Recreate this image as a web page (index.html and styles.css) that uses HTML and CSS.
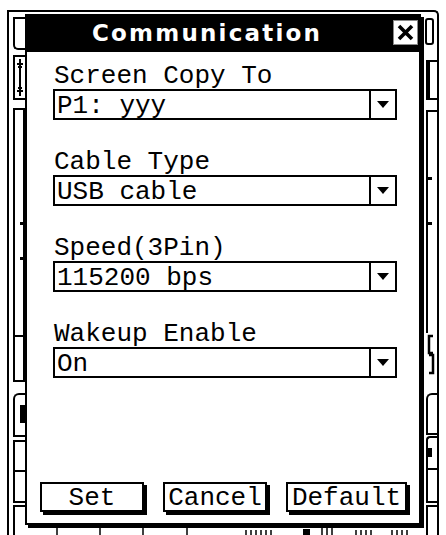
FILE: index.html
```html
<!DOCTYPE html>
<html lang="en">
<head>
<meta charset="utf-8">
<title>Communication</title>
<link rel="stylesheet" href="styles.css">
</head>
<body>
<div class="frame">
  <div class="strip strip-left">
    <div class="tab tab-a"></div>
    <div class="tab tab-b">
      <svg class="glyph" width="10" height="41" viewBox="0 0 10 41"><path d="M5 2V39M2 7H8M3 10H7M2 34H8M3 31H7" stroke="#000" stroke-width="2" fill="none"/></svg>
    </div>
    <div class="tab tab-c">
      <span class="mark mark-1"></span>
      <span class="mark mark-2"></span>
      <span class="divider"></span>
    </div>
    <div class="tab tab-d"><span class="knob"></span></div>
    <div class="tab tab-e"></div>
    <div class="tab tab-f"></div>
    <div class="tab tab-g"></div>
  </div>

  <div class="center">
    <div class="dialog">
      <div class="titlebar">
        <span class="title">Communication</span>
        <span class="close">
          <svg width="23" height="23" viewBox="0 0 23 23"><path d="M5 5L18 18M18 5L5 18" stroke="#000" stroke-width="3.6" fill="none"/></svg>
        </span>
      </div>
      <div class="body">
        <div class="field">
          <div class="label">Screen Copy To</div>
          <div class="select"><span class="value">P1: yyy</span><span class="arrow"></span></div>
        </div>
        <div class="field">
          <div class="label">Cable Type</div>
          <div class="select"><span class="value">USB cable</span><span class="arrow"></span></div>
        </div>
        <div class="field">
          <div class="label">Speed(3Pin)</div>
          <div class="select"><span class="value">115200 bps</span><span class="arrow"></span></div>
        </div>
        <div class="field">
          <div class="label">Wakeup Enable</div>
          <div class="select"><span class="value">On</span><span class="arrow"></span></div>
        </div>
        <div class="buttons">
          <button class="btn btn-set">Set</button>
          <button class="btn btn-cancel">Cancel</button>
          <button class="btn btn-default">Default</button>
        </div>
      </div>
    </div>
    <svg class="ticks" width="399" height="8" viewBox="0 0 399 8">
      <path d="M32 0V8M75 0V8M118 0V8M162 0V8M221 2V8M226 2V8M231 2V8M236 2V8M241 2V8M246 2V8M297 0V8M302 0V8M307 0V8M331 2V8M336 2V8M341 2V8M346 2V8M367 2V8M372 2V8M377 2V8M382 2V8" stroke="#000" stroke-width="1.5"/>
      <rect x="278" y="1" width="7" height="7" fill="#000"/>
    </svg>
  </div>

  <div class="strip strip-right">
    <div class="rtab rtab-1"></div>
    <div class="rtab rtab-2"></div>
    <div class="rtab rtab-3">
      <span class="rmark rmark-1"></span>
      <span class="rmark rmark-2"></span>
    </div>
    <div class="rtab rtab-4">
      <svg width="11" height="45" viewBox="0 0 11 45"><path d="M7 3H3V20H7M3 22H7V40H3" stroke="#000" stroke-width="2.5" fill="none"/></svg>
    </div>
    <div class="rtab rtab-5"></div>
    <div class="rtab rtab-6"><span class="rblob"></span></div>
    <div class="rtab rtab-7"></div>
    <div class="rtab rtab-8"></div>
  </div>
</div>
</body>
</html>
```

FILE: styles.css
```css
html, body {
  margin: 0;
  padding: 0;
  background: #fff;
}

body {
  width: 446px;
  height: 535px;
  overflow: hidden;
  font-family: "Liberation Mono", "DejaVu Sans Mono", monospace;
  color: #000;
}

/* background window frame */
.frame {
  margin: 10px 0 0 7px;
  width: 432px;
  height: 540px;
  box-sizing: border-box;
  border: 2px solid #000;
  border-bottom: none;
  border-top-right-radius: 5px;
  display: flex;
}

.strip-left {
  width: 16px;
  display: flex;
  flex-direction: column;
  align-items: flex-end;
}

.tab {
  position: relative;
  width: 12px;
  box-sizing: border-box;
  border: 2px solid #000;
  border-right: none;
  background: #fff;
  flex-shrink: 0;
}

.tab-a { margin-top: 5px; height: 33px; border-bottom-left-radius: 5px; }
.tab-b { margin-top: 5px; height: 45px; display: flex; justify-content: center; align-items: center; }
.tab-c { margin-top: 8px; height: 274px; border-right: 2px solid #000; }
.tab-d { margin-top: 11px; height: 44px; border-top-left-radius: 6px; }
.tab-e { margin-top: 3px; height: 32px; }
.tab-f { height: 31px; border-top: none; }
.tab-g { margin-top: 2px; height: 40px; }

.glyph { display: block; }

.mark {
  position: absolute;
  right: 0;
  width: 3px;
  height: 3px;
  background: #000;
}
.mark-1 { top: 112px; }
.mark-2 { top: 147px; }

.divider {
  position: absolute;
  left: 0;
  right: 0;
  top: 225px;
  height: 2px;
  background: #000;
}

.knob {
  position: absolute;
  right: 0;
  top: 10px;
  width: 5px;
  height: 18px;
  background: #000;
}

/* center column holding the dialog */
.center {
  width: 399px;
  padding-top: 2px;
  display: flex;
  flex-direction: column;
  flex-shrink: 0;
}

.dialog {
  width: 396px;
  height: 511px;
  box-sizing: border-box;
  border: 2px solid #000;
  box-shadow: 3px 3px 0 #000;
  background: #fff;
  display: flex;
  flex-direction: column;
}

.titlebar {
  height: 36px;
  flex-shrink: 0;
  background: #000;
  display: flex;
  align-items: flex-start;
  padding-left: 65px;
}

.title {
  flex: 1;
  font-family: "DejaVu Sans", "Liberation Sans", sans-serif;
  font-weight: bold;
  font-size: 23px;
  letter-spacing: 2.2px;
  line-height: 34px;
  color: #fff;
  white-space: nowrap;
}

.close {
  margin-top: 4px;
  margin-right: 1px;
  width: 25px;
  height: 25px;
  box-sizing: border-box;
  background: #fff;
  border: 1px solid #8a8a8a;
  display: flex;
  align-items: center;
  justify-content: center;
}

.close svg { display: block; }

.body {
  flex: 1;
  display: flex;
  flex-direction: column;
  padding: 8px 0 0 26px;
}

.field + .field { margin-top: 26px; }

.label {
  font-size: 26px;
  line-height: 26px;
  padding: 3px 0 0 1px;
  white-space: pre;
}

.select {
  width: 344px;
  height: 31px;
  box-sizing: border-box;
  border: 2px solid #000;
  display: flex;
}

.value {
  flex: 1;
  font-size: 26px;
  line-height: 25px;
  padding: 3px 0 0 2px;
  white-space: pre;
  height: 27px;
  box-sizing: border-box;
}

.arrow {
  width: 26px;
  box-sizing: border-box;
  border-left: 2px solid #000;
  display: flex;
  align-items: center;
  justify-content: center;
}

.arrow::after {
  content: "";
  width: 0;
  height: 0;
  border-left: 6px solid transparent;
  border-right: 6px solid transparent;
  border-top: 7px solid #000;
}

.buttons {
  margin-top: auto;
  margin-bottom: 11px;
  margin-left: -13px;
  display: flex;
  gap: 19px;
}

.btn {
  height: 30px;
  box-sizing: border-box;
  border: 2px solid #000;
  border-radius: 0;
  box-shadow: 3px 3px 0 #000;
  background: #fff;
  color: #000;
  font-family: "Liberation Mono", "DejaVu Sans Mono", monospace;
  font-size: 26px;
  line-height: 24px;
  padding: 2px 0 0 0;
  margin: 0;
  text-align: center;
  white-space: pre;
}

.btn-set { width: 104px; }
.btn-cancel { width: 104px; }
.btn-default { width: 121px; }

.ticks {
  display: block;
  margin-top: 3px;
}

/* right strip */
.strip-right {
  width: 13px;
  display: flex;
  flex-direction: column;
  align-items: flex-end;
}

.rtab {
  position: relative;
  width: 11px;
  box-sizing: border-box;
  border: 2px solid #000;
  border-right: none;
  background: #fff;
  flex-shrink: 0;
}

.rtab-1 { margin-top: 6px; height: 27px; width: 9px; border-right: 2px solid #000; border-radius: 3px; margin-right: 3px; }
.rtab-2 { margin-top: 15px; height: 40px; border-left-width: 4px; }
.rtab-3 { margin-top: 10px; height: 223px; border-bottom: none; }
.rtab-4 { height: 47px; border: none; }
.rtab-4 svg { display: block; }
.rtab-5 { margin-top: 13px; height: 42px; border-top-left-radius: 6px; }
.rtab-6 { margin-top: 1px; height: 34px; border-top-left-radius: 4px; }
.rtab-7 { height: 33px; border-top: none; }
.rtab-8 { margin-top: 2px; height: 40px; }

.rmark {
  position: absolute;
  left: 0;
  width: 4px;
  height: 3px;
  background: #000;
}
.rmark-1 { top: 65px; }
.rmark-2 { top: 110px; }

.rblob {
  position: absolute;
  left: 0;
  top: 10px;
  width: 4px;
  height: 9px;
  background: #000;
}
```
